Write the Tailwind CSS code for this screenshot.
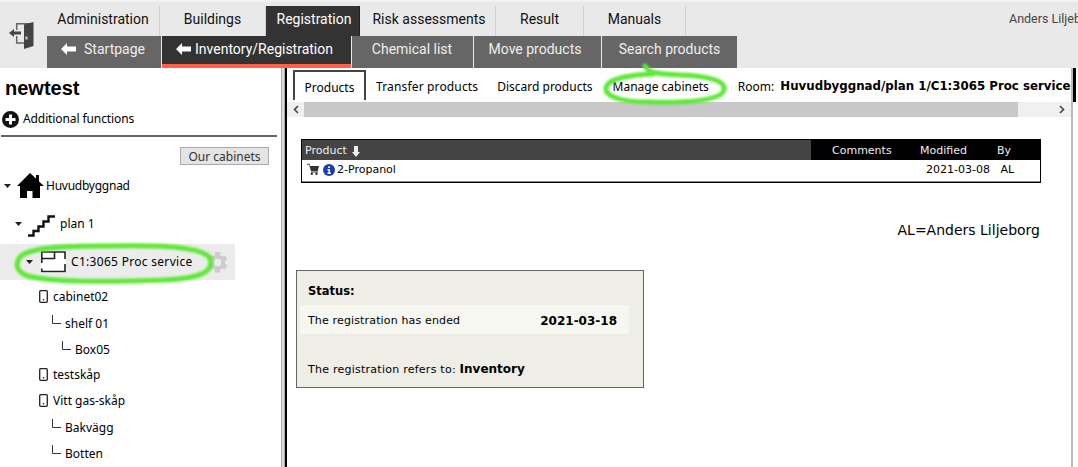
<!DOCTYPE html>
<html lang="en">
<head>
  <meta charset="UTF-8" />
  <title>Registration</title>
  <script src="https://cdn.jsdelivr.net/npm/@tailwindcss/browser@4"></script>
</head>
<body class="relative h-[467px] w-[1078px] overflow-hidden bg-white font-['DejaVu_Sans',sans-serif] text-[11px] text-black">
  <!-- top menu -->
  <div class="flex h-[68px] border-t-2 border-[#f2f2f2] bg-[#e9e9e9] font-['Roboto',sans-serif] text-[14px]">
    <div class="w-[47px] pt-[19px] pl-[8px]">
      <svg width="27" height="29" viewBox="0 0 27 29">
        <path d="M8.700 9V2.700H24V22H16" fill="none" stroke="#666" stroke-width="1.500"/>
        <path d="M8.700 15v7H16" fill="none" stroke="#666" stroke-width="1.500"/>
        <path d="M16 3.500L25.500 1V25L16 28Z" fill="#444"/>
        <rect x="17.500" y="15.500" width="2" height="3" fill="#ccc"/>
        <path d="M1 12L6 8V10.500H13V13.500H6V16Z" fill="#444"/>
      </svg>
    </div>
    <div class="w-[1031px]">
      <div class="relative flex h-[34px] pt-1">
        <a class="flex w-[113px] items-center justify-center border-r border-[#d0d0d0] pb-[4px] text-[#111]">Administration</a>
        <a class="flex w-[106px] items-center justify-center border-r border-[#d0d0d0] pb-[4px] text-[#111]">Buildings</a>
        <a class="flex w-[94px] items-center justify-center border-r border-[#222] bg-[#333] pb-[4px] pl-[3px] text-white">Registration</a>
        <a class="flex w-[136px] items-center justify-center border-r border-[#d0d0d0] pb-[4px] pl-[3px] text-[#111]">Risk assessments</a>
        <a class="flex w-[88px] items-center justify-center border-r border-[#d0d0d0] pb-[4px] text-[#111]">Result</a>
        <a class="flex w-[102px] items-center justify-center border-r border-[#d0d0d0] pb-[4px] text-[#111]">Manuals</a>
        <span class="ml-auto w-[69px] overflow-hidden pt-[4px] text-[12.500px] whitespace-nowrap text-[#444]">Anders Liljeborg</span>
      </div>
      <div class="flex h-[32px] text-[#eee]">
        <a class="flex w-[114px] items-center justify-center gap-[8px] bg-[#666] pr-[2px] pb-[6px]"><svg width="15" height="12" viewBox="0 0 15 12" fill="#fff"><path d="M0 6 L6 0 V3.500 H15 V8.500 H6 V12 Z"/></svg>Startpage</a>
        <a class="ml-px flex w-[189px] items-center justify-center gap-[4px] border-b-4 border-[#ff6347] bg-[#333] pr-[4px] pb-[2px] text-white"><svg width="15" height="12" viewBox="0 0 15 12" fill="#fff"><path d="M0 6 L6 0 V3.500 H15 V8.500 H6 V12 Z"/></svg>Inventory/Registration</a>
        <a class="ml-px flex w-[121px] items-center justify-center bg-[#666] pr-[1px] pb-[6px]">Chemical list</a>
        <a class="ml-px flex w-[127px] items-center justify-center bg-[#666] pr-[5px] pb-[6px]">Move products</a>
        <a class="ml-px flex w-[135px] items-center justify-center bg-[#666] pb-[6px]">Search products</a>
      </div>
    </div>
  </div>

  <div class="flex h-[399px]">
    <!-- left tree -->
    <aside class="w-[281px] shrink-0">
      <h1 class="pt-[7px] pl-[5px] font-['Liberation_Sans',sans-serif] text-[20px] leading-[26px] font-bold">newtest</h1>
      <div class="mt-[9px] flex items-center gap-[4px] pl-[2px] font-['Noto_Sans',sans-serif] text-[12px] leading-[18px] tracking-[-0.1px]">
        <svg width="17" height="17" viewBox="0 0 17 17"><circle cx="8.500" cy="8.500" r="8.500" fill="#111"/><path d="M7 3.500h3v3.500h3.500v3H10v3.500H7V10H3.500V7H7z" fill="#fff"/></svg>
        Additional functions
      </div>
      <div class="mt-[7px] mr-[4px] ml-[1px] h-[2px] bg-[#666]"></div>
      <div class="flex justify-end pt-[10px] pr-[12px]">
        <button class="h-[18px] w-[89px] border border-[#aaa] bg-[#e4e4e4] font-['Noto_Sans',sans-serif] text-[12px] leading-[15px] text-[#333]">Our cabinets</button>
      </div>
      <ul class="font-['Noto_Sans',sans-serif] text-[12px] leading-[18px]">
        <li class="mt-[7px] flex h-[28px] items-center pl-[4px]">
          <svg width="7" height="4" viewBox="0 0 7 4" fill="#222"><path d="M0 0h7L3.500 4z"/></svg>
          <svg class="ml-[6px]" width="27" height="26" viewBox="0 0 27 26" fill="#000"><path d="M13 0L19 5.500V2H22V8.500L27 13H23V25H15.500V18H10V25H3V13H0Z"/></svg>
          <span class="ml-[2px] tracking-[-0.25px]">Huvudbyggnad</span>
        </li>
        <li class="mt-[10px] flex h-[28px] items-center pl-[15px]">
          <svg width="7" height="4" viewBox="0 0 7 4" fill="#222"><path d="M0 0h7L3.500 4z"/></svg>
          <svg class="mt-[4px] ml-[6px]" width="27" height="22" viewBox="0 0 27 22" fill="none" stroke="#111" stroke-width="2.400"><path d="M0 20.500H5.500V16H10.500V11.500H15.500V6.500H20.500V1.500H27"/></svg>
          <span class="ml-[5px]">plan 1</span>
        </li>
        <li class="mt-[6px] flex h-[36px] w-[235px] items-center bg-[#ececec] pr-[5px] pl-[26px]">
          <svg width="7" height="4" viewBox="0 0 7 4" fill="#222"><path d="M0 0h7L3.500 4z"/></svg>
          <svg class="ml-[8px]" width="25" height="22" viewBox="0 0 25 22" fill="none" stroke="#222" stroke-width="1.600">
            <rect x="0" y="0" width="25" height="22" fill="#fff" stroke="none"/>
            <path d="M.8 12V1H24V8M.8 7.500H13.500V1M24 13V20.500H.8V17.500"/>
          </svg>
          <span class="ml-[5px] tracking-[0.3px]">C1:3065 Proc service</span>
          <svg class="ml-auto" width="25" height="25" viewBox="0 0 24 24" fill="#cdcdcd"><path fill-rule="evenodd" d="M19.140 12.940c.04-.3.06-.61.06-.94 0-.32-.02-.64-.07-.94l2.030-1.580a.49.49 0 0 0 .12-.61l-1.920-3.320a.49.49 0 0 0-.59-.22l-2.390.96a7 7 0 0 0-1.620-.94l-.36-2.540A.48.48 0 0 0 13.920 2h-3.840a.48.48 0 0 0-.47.41l-.36 2.540a7 7 0 0 0-1.620.94l-2.390-.96a.48.48 0 0 0-.59.22L2.740 8.870a.48.48 0 0 0 .12.61l2.030 1.580c-.05.3-.09.63-.09.94s.02.64.07.94l-2.030 1.580a.49.49 0 0 0-.12.61l1.920 3.320c.12.22.37.29.59.22l2.390-.96c.5.38 1.030.7 1.620.94l.36 2.540c.05.24.24.41.48.41h3.840c.24 0 .44-.17.47-.41l.36-2.540a7 7 0 0 0 1.620-.94l2.390.96c.22.08.47 0 .59-.22l1.920-3.320a.48.48 0 0 0-.12-.61l-2.010-1.580zM12 15.600A3.600 3.600 0 1 1 12 8.400a3.600 3.600 0 0 1 0 7.200z"/></svg>
        </li>
        <li class="mt-[8px] flex h-[18px] items-center pl-[39px]">
          <svg class="mb-[1px]" width="9" height="13" viewBox="0 0 9 13" fill="none" stroke="#222" stroke-width="1.300"><rect x=".7" y=".7" width="7.600" height="11.600" rx="1"/><path d="M4.500 9v1.500"/></svg>
          <span class="ml-[5px]">cabinet02</span>
        </li>
        <li class="mt-[9px] flex h-[18px] items-center pl-[52px]">
          <svg class="mb-[9px]" width="9" height="10" viewBox="0 0 9 10" fill="none" stroke="#333"><path d="M.5 0v8.500H9"/></svg>
          <span class="ml-[4px]">shelf 01</span>
        </li>
        <li class="mt-[8px] flex h-[18px] items-center pl-[62px]">
          <svg class="mb-[9px]" width="9" height="10" viewBox="0 0 9 10" fill="none" stroke="#333"><path d="M.5 0v8.500H9"/></svg>
          <span class="ml-[4px]">Box05</span>
        </li>
        <li class="mt-[7px] flex h-[18px] items-center pl-[39px]">
          <svg class="mb-[1px]" width="9" height="13" viewBox="0 0 9 13" fill="none" stroke="#222" stroke-width="1.300"><rect x=".7" y=".7" width="7.600" height="11.600" rx="1"/><path d="M4.500 9v1.500"/></svg>
          <span class="ml-[5px]">testskåp</span>
        </li>
        <li class="mt-[8px] flex h-[18px] items-center pl-[39px]">
          <svg class="mb-[1px]" width="9" height="13" viewBox="0 0 9 13" fill="none" stroke="#222" stroke-width="1.300"><rect x=".7" y=".7" width="7.600" height="11.600" rx="1"/><path d="M4.500 9v1.500"/></svg>
          <span class="ml-[5px]">Vitt gas-skåp</span>
        </li>
        <li class="mt-[9px] flex h-[18px] items-center pl-[52px]">
          <svg class="mb-[9px]" width="9" height="10" viewBox="0 0 9 10" fill="none" stroke="#333"><path d="M.5 0v8.500H9"/></svg>
          <span class="ml-[4px]">Bakvägg</span>
        </li>
        <li class="mt-[8px] flex h-[18px] items-center pl-[52px]">
          <svg class="mb-[9px]" width="9" height="10" viewBox="0 0 9 10" fill="none" stroke="#333"><path d="M.5 0v8.500H9"/></svg>
          <span class="ml-[4px]">Botten</span>
        </li>
      </ul>
    </aside>

    <!-- splitter -->
    <div class="w-[4px] shrink-0 border-x border-[#aaa] bg-[#ddd]"></div>

    <!-- content -->
    <main class="w-[788px] shrink-0 border-r-2 border-l-2 border-r-[#bbb] border-l-black">
      <div class="flex h-[34px] items-end font-['Noto_Sans',sans-serif] text-[12px]">
        <a class="mb-[2px] ml-[6px] flex h-[30px] w-[73px] items-center justify-center border-x-2 border-t-2 border-[#444] pt-[4px]">Products</a>
        <a class="mb-[2px] flex h-[30px] items-center pt-[4px] pl-[10px] tracking-[0.15px]">Transfer products</a>
        <a class="mb-[2px] flex h-[30px] items-center pt-[4px] pl-[19px]">Discard products</a>
        <a class="mb-[2px] flex h-[30px] items-center pt-[4px] pl-[20px]">Manage cabinets</a>
        <span class="mb-[2px] flex h-[30px] items-center pt-[4px] pl-[29px] whitespace-nowrap">Room:&nbsp;<b class="ml-[3px] font-['DejaVu_Sans',sans-serif] text-[11.800px]">Huvudbyggnad/plan 1/C1:3065 Proc service</b></span>
      </div>
      <div class="flex h-[15px] items-center bg-[#c8c8c8]">
        <span class="flex h-full w-[17px] items-center justify-center bg-[#f0f0f0]"><svg width="6" height="9" viewBox="0 0 6 9" fill="none" stroke="#444" stroke-width="1.600"><path d="M5 1L1.500 4.500 5 8"/></svg></span>
        <span class="ml-auto flex h-full w-[53px] items-center justify-center bg-[#f0f0f0] pl-[34px]"><svg width="6" height="9" viewBox="0 0 6 9" fill="none" stroke="#444" stroke-width="1.600"><path d="M1 1l3.500 3.500L1 8"/></svg></span>
      </div>

      <!-- products table -->
      <div class="mt-[22px] ml-[14px] w-[740px] border border-black">
        <div class="flex h-[20px] items-center bg-black text-[#eee]">
          <div class="flex h-full w-[509px] items-center gap-[5px] bg-[#444] pt-[2px] pl-[3px]">Product
            <svg width="8" height="11" viewBox="0 0 8 11" fill="#eee"><path d="M2 0h4v6h2l-4 5-4-5h2z"/></svg>
          </div>
          <span class="ml-[21px] w-[88px] pt-[3px]">Comments</span>
          <span class="w-[77px] pt-[3px]">Modified</span>
          <span class="pt-[3px]">By</span>
        </div>
        <div class="flex h-[22px] items-center border-b border-[#888] pl-[5px]">
          <svg class="mb-[3px]" width="12" height="12" viewBox="0 0 12 12"><path d="M0 .8h2.400L3 3H12L10.800 8H4L2 1.800H0Z" fill="#333"/><path d="M4 9h7" stroke="#333"/><circle cx="4.800" cy="10.800" r="1.200" fill="#333"/><circle cx="9.500" cy="10.800" r="1.200" fill="#333"/></svg>
          <svg class="mb-[2px] ml-[4px]" width="12" height="12" viewBox="0 0 12 12"><circle cx="6" cy="6" r="6" fill="#1a3cb0"/><path d="M5 2.500h2v1.500H5zM4.500 5H7v3.500h1V10H4.500V8.500h1V6.500h-1z" fill="#fff"/></svg>
          <span class="ml-[2px]">2-Propanol</span>
          <span class="ml-auto w-[114px]">2021-03-08&nbsp;&nbsp;&nbsp;AL</span>
        </div>
      </div>

      <p class="mt-[38px] mr-[31px] text-right text-[14px] leading-[18px]">AL=Anders Liljeborg</p>

      <!-- status box -->
      <div class="mt-[31px] ml-[9px] h-[118px] w-[348px] border border-[#666] bg-[#eeede6] px-[3px]">
        <p class="pt-[13px] pl-[8px] text-[11.500px] leading-[14px] font-bold">Status:</p>
        <div class="mt-[7px] flex h-[29px] w-[329px] items-center justify-between bg-[#f7f7f2] pt-[3px] pr-[12px] pl-[8px] tracking-[0.15px]">
          <span>The registration has ended</span><b class="text-[12px] tracking-normal">2021-03-18</b>
        </div>
        <p class="mt-[28px] pl-[8px] leading-[14px] tracking-[0.25px]">The registration refers to: <b class="text-[12px] tracking-normal">Inventory</b></p>
      </div>
    </main>

    <!-- end of the frame -->
    <div class="h-[34px] w-[3px] shrink-0 bg-black"></div>
  </div>

  <!-- green marker scribbles drawn on top of the screenshot -->
  <svg class="pointer-events-none absolute top-0 left-0 blur-[1px]" width="1078" height="467" fill="none" stroke="#5fe838" stroke-width="5" stroke-linecap="round">
    <path d="M18 261 C20 250 45 246 100 246 C150 245 200 245 210 258 C214 270 205 278 165 280 C110 282 50 282 28 276 C20 273 15 268 18 261 Z"/>
    <path d="M645 66 C648 72 655 74 680 75 C710 76 726 81 724 90 C722 100 690 103 650 102 C620 102 605 96 606 88 C607 80 625 75 653 74"/>
  </svg>
</body>
</html>
